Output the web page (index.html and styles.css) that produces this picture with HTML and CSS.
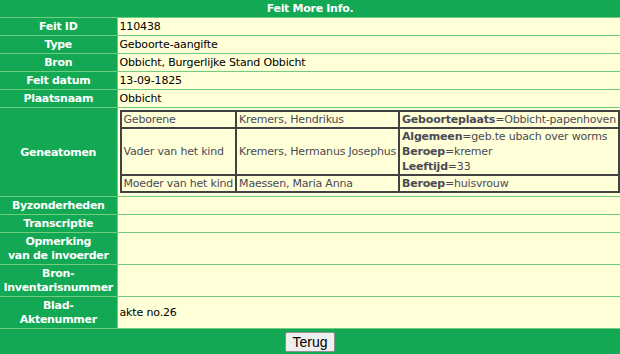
FILE: index.html
```html
<!DOCTYPE html>
<html lang="nl">
<head>
    <meta charset="UTF-8">
    <title>Feit More Info.</title>
    <link rel="stylesheet" href="styles.css">
</head>
<body>

    <table class="feit">
        <colgroup>
            <col class="label-kol">
            <col>
        </colgroup>
        <tr>
            <th colspan="2" class="kop">Feit More Info.</th>
        </tr>
        <tr>
            <th>Feit ID</th>
            <td>110438</td>
        </tr>
        <tr>
            <th>Type</th>
            <td>Geboorte-aangifte</td>
        </tr>
        <tr>
            <th>Bron</th>
            <td>Obbicht, Burgerlijke Stand Obbicht</td>
        </tr>
        <tr>
            <th>Feit datum</th>
            <td>13-09-1825</td>
        </tr>
        <tr>
            <th>Plaatsnaam</th>
            <td>Obbicht</td>
        </tr>
        <tr>
            <th>Geneatomen</th>
            <td class="atomen-cel">
                <!-- personen bij dit feit -->
                <table class="atomen">
                    <tr>
                        <td>Geborene</td>
                        <td>Kremers, Hendrikus</td>
                        <td><b>Geboorteplaats</b>=Obbicht-papenhoven</td>
                    </tr>
                    <tr>
                        <td>Vader van het kind</td>
                        <td>Kremers, Hermanus Josephus</td>
                        <td><b>Algemeen</b>=geb.te ubach over worms<br><b>Beroep</b>=kremer<br><b>Leeftijd</b>=33</td>
                    </tr>
                    <tr>
                        <td>Moeder van het kind</td>
                        <td>Maessen, Maria Anna</td>
                        <td><b>Beroep</b>=huisvrouw</td>
                    </tr>
                </table>
            </td>
        </tr>
        <tr>
            <th>Byzonderheden</th>
            <td></td>
        </tr>
        <tr>
            <th>Transcriptie</th>
            <td></td>
        </tr>
        <tr>
            <th>Opmerking<br>van de invoerder</th>
            <td></td>
        </tr>
        <tr>
            <th>Bron-<br>Inventarisnummer</th>
            <td></td>
        </tr>
        <tr>
            <th>Blad-<br>Aktenummer</th>
            <td>akte no.26</td>
        </tr>
        <tr>
            <td colspan="2" class="voet">
                <button type="button" onclick="history.back()">Terug</button>
            </td>
        </tr>
    </table>

</body>
</html>
```

FILE: styles.css
```css
/* Algemeen */
body {
    margin: 0;
    font-family: 'DejaVu Sans', Verdana, sans-serif;
    font-size: 11px;
    letter-spacing: -0.15px;
    background-color: #fff;
}

/* Hoofdtabel */
.feit {
    width: 100%;
    table-layout: fixed;
    border-collapse: collapse;
    line-height: 14px;
}

.label-kol {
    width: 117px;
}

.feit > tbody > tr > th,
.feit > tbody > tr > td {
    border-bottom: 1px solid #6fcf7f;
    padding: 2px 2px 1px;
    vertical-align: middle;
}

.feit > tbody > tr > th {
    background-color: #12a854;
    color: #fff;
    font-weight: bold;
    text-align: center;
    border-right: 1px solid #6fcf7f;
    letter-spacing: -0.3px;
}

.feit > tbody > tr > td {
    background-color: #ffffd8;
    color: #000;
    text-align: left;
}

.feit > tbody > tr > th.kop {
    border-right: none;
}

/* Geneatomen */
.feit > tbody > tr > td.atomen-cel {
    padding: 2px 0 3px 2px;
}

.atomen {
    border-collapse: collapse;
    border: 2px solid #424242;
    color: #4a4a55;
    white-space: nowrap;
    letter-spacing: -0.2px;
}

.atomen td {
    border: 2px solid #424242;
    padding: 0 2px;
    line-height: 15px;
}

/* Voetregel */
.feit > tbody > tr > td.voet {
    background-color: #12a854;
    text-align: center;
    padding: 3px 0 2px;
    border-bottom: 2px solid #6fcf7f;
}

button {
    font-family: 'Liberation Sans', Arial, sans-serif;
    font-size: 14px;
    letter-spacing: 0;
    padding: 1px 6px;
    background-color: #efefef;
    border: 1px solid #8f8f8f;
    border-radius: 2px;
    color: #000;
}
```
